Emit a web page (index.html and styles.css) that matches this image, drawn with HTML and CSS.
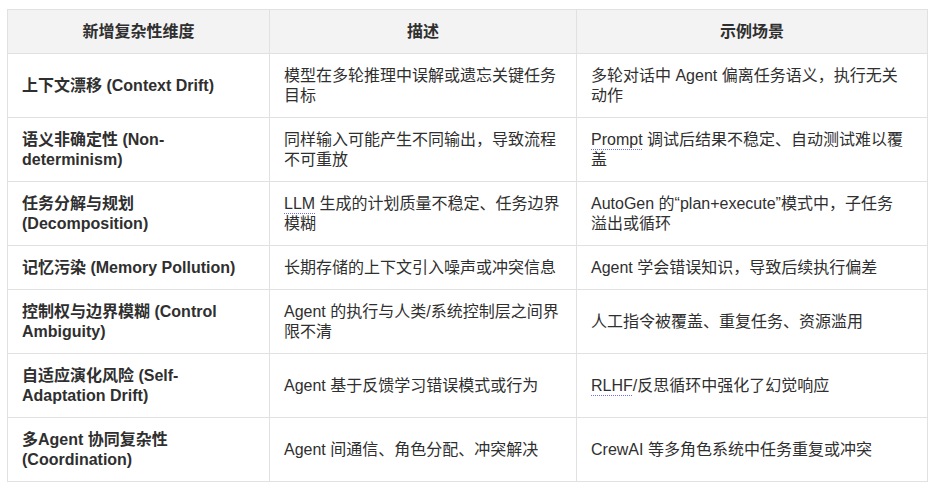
FILE: index.html
```html
<!DOCTYPE html>
<html lang="zh-CN">
<head>
<meta charset="utf-8">
<title>复杂性维度</title>
<link rel="stylesheet" href="styles.css">
</head>
<body>
<table class="dim-table">
  <colgroup>
    <col class="c1">
    <col class="c2">
    <col class="c3">
  </colgroup>
  <thead>
    <tr>
      <th>新增复杂性维度</th>
      <th>描述</th>
      <th>示例场景</th>
    </tr>
  </thead>
  <tbody>
    <tr>
      <td class="name">上下文漂移 (Context Drift)</td>
      <td>模型在多轮推理中误解或遗忘关键任务目标</td>
      <td>多轮对话中 Agent 偏离任务语义，执行无关动作</td>
    </tr>
    <tr>
      <td class="name">语义非确定性 (Non-determinism)</td>
      <td>同样输入可能产生不同输出，导致流程不可重放</td>
      <td><span class="mark">Prompt</span> 调试后结果不稳定、自动测试难以覆盖</td>
    </tr>
    <tr>
      <td class="name">任务分解与规划 (Decomposition)</td>
      <td><span class="mark">LLM</span> 生成的计划质量不稳定、任务边界模糊</td>
      <td>AutoGen 的“plan+execute”模式中，子任务<span class="keep">溢出或循环</span></td>
    </tr>
    <tr>
      <td class="name">记忆污染 (Memory Pollution)</td>
      <td>长期存储的上下文引入噪声或冲突信息</td>
      <td>Agent 学会错误知识，导致后续执行偏差</td>
    </tr>
    <tr>
      <td class="name">控制权与边界模糊 (Control Ambiguity)</td>
      <td>Agent 的执行与人类/系统控制层之间界限不清</td>
      <td>人工指令被覆盖、重复任务、资源滥用</td>
    </tr>
    <tr>
      <td class="name">自适应演化风险 (Self-Adaptation Drift)</td>
      <td>Agent 基于反馈学习错误模式或行为</td>
      <td><span class="mark">RLHF</span>/反思循环中强化了幻觉响应</td>
    </tr>
    <tr>
      <td class="name">多Agent 协同复杂性 (Coordination)</td>
      <td>Agent 间通信、角色分配、冲突解决</td>
      <td>CrewAI 等多角色系统中任务重复或冲突</td>
    </tr>
  </tbody>
</table>
</body>
</html>
```

FILE: styles.css
```css
html, body {
  margin: 0;
  padding: 0;
  background: #ffffff;
}

body {
  font-family: "Liberation Sans", "Noto Sans CJK SC", sans-serif;
  font-size: 16px;
  line-height: 20px;
  color: #2f2f2f;
}

.dim-table {
  margin: 9px 0 0 7px;
  border-collapse: collapse;
  table-layout: fixed;
  width: 920px;
}

.c1 { width: 262px; }
.c2 { width: 307px; }
.c3 { width: 351px; }

.dim-table th,
.dim-table td {
  border: 1px solid #e1e1e1;
  padding: 11.5px 14px;
  vertical-align: middle;
  text-align: left;
}

.dim-table th {
  background: #f3f3f3;
  font-weight: bold;
  text-align: center;
}

.dim-table td.name {
  font-weight: bold;
}

.keep {
  white-space: nowrap;
}

.mark {
  text-decoration: underline dotted #6f6ff5;
  text-decoration-thickness: 1px;
  text-underline-offset: 4px;
}
```
